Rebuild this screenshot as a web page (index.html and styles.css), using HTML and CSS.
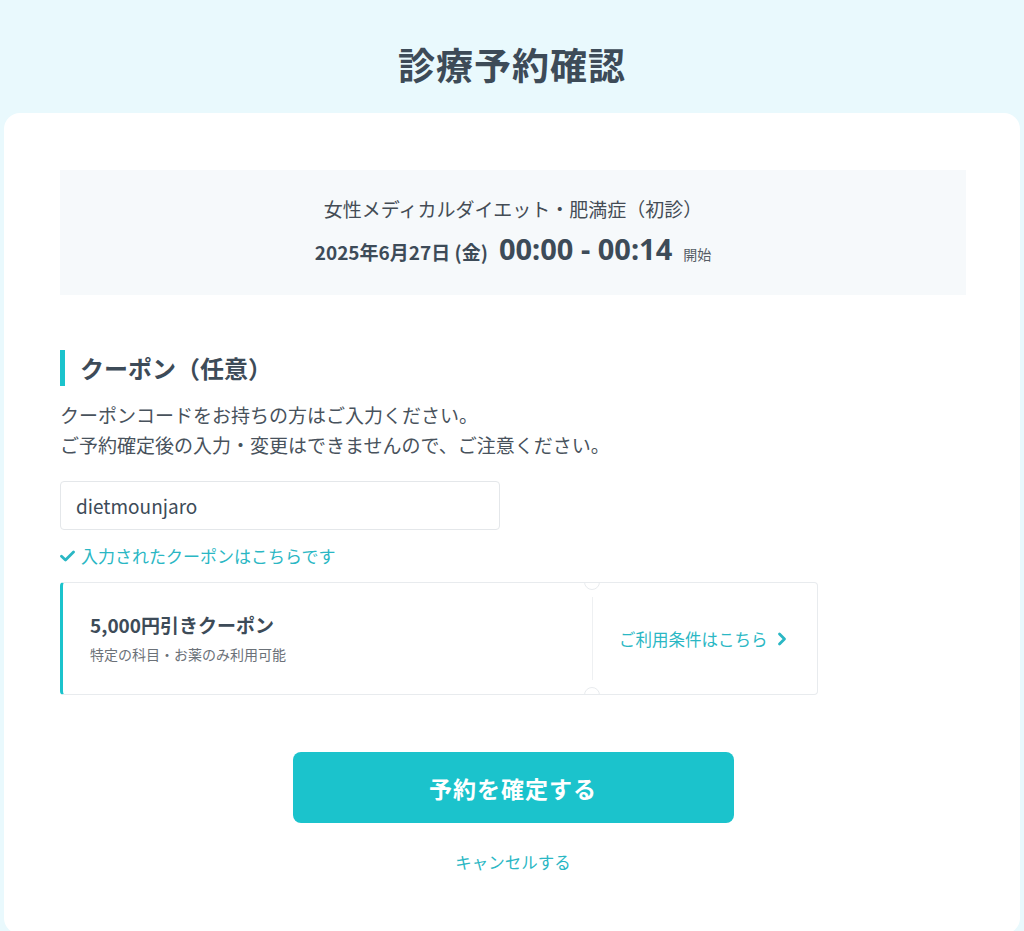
FILE: index.html
```html
<!DOCTYPE html>
<html lang="ja">
<head>
    <meta charset="UTF-8">
    <meta name="viewport" content="width=device-width, initial-scale=1.0">
    <title>診療予約確認</title>
    <link rel="stylesheet" href="styles.css">
</head>
<body>
    <h1 class="page-title">診療予約確認</h1>

    <div class="card">
        <div class="summary">
            <p class="summary-menu">女性メディカルダイエット・肥満症（初診）</p>
            <p class="summary-date">
                <span class="date">2025年6月27日 (金)</span>
                <span class="time">00:00 - 00:14</span>
                <span class="start">開始</span>
            </p>
        </div>

        <h2 class="section-title">クーポン（任意）</h2>
        <p class="section-note">クーポンコードをお持ちの方はご入力ください。<br>ご予約確定後の入力・変更はできませんので、ご注意ください。</p>

        <input class="coupon-input" type="text" value="dietmounjaro">

        <p class="coupon-ok">
            <svg width="15" height="12" viewBox="0 0 15 12"><path d="M1.5 6.2 L5.5 10 L13.5 2" fill="none" stroke="#2ab7c4" stroke-width="2.8" stroke-linecap="round" stroke-linejoin="round"/></svg>
            入力されたクーポンはこちらです
        </p>

        <div class="ticket">
            <div class="ticket-main">
                <div class="ticket-title">5,000円引きクーポン</div>
                <div class="ticket-sub">特定の科目・お薬のみ利用可能</div>
            </div>
            <div class="ticket-side">
                <a class="ticket-link" href="#">ご利用条件はこちら
                    <svg width="10" height="14" viewBox="0 0 10 14"><path d="M2.5 2 L7.5 7 L2.5 12" fill="none" stroke="#2ab7c4" stroke-width="2.8" stroke-linecap="round" stroke-linejoin="round"/></svg>
                </a>
            </div>
            <span class="notch notch-top"></span>
            <span class="notch notch-bottom"></span>
        </div>

        <div class="actions">
            <button class="confirm-btn">予約を確定する</button>
            <a class="cancel-link" href="#">キャンセルする</a>
        </div>
    </div>
</body>
</html>
```

FILE: styles.css
```css
body {
    margin: 0;
    padding-top: 37px;
    background-color: #e9f9fd;
    font-family: "Noto Sans CJK JP", "Noto Sans", sans-serif;
    color: #3d4b58;
}

p {
    margin: 0;
}

.page-title {
    margin: 0 0 22px;
    text-align: center;
    font-size: 37px;
    line-height: 54px;
    font-weight: 700;
    color: #3d4b58;
    letter-spacing: 1px;
}

.card {
    margin: 0 4px;
    padding: 57px 54px 60px 56px;
    background-color: #ffffff;
    border-radius: 16px;
    min-height: 700px;
}

.summary {
    background-color: #f6f9fb;
    padding: 25px 0 21px;
    text-align: center;
}

.summary-menu {
    font-size: 19px;
    line-height: 28px;
    color: #444c55;
}

.summary-date {
    margin-top: 6px;
    display: flex;
    justify-content: center;
    align-items: baseline;
    gap: 11px;
    line-height: 40px;
}

.summary-date .date {
    font-size: 19px;
    font-weight: 700;
}

.summary-date .time {
    font-size: 29px;
    font-weight: 700;
    font-family: "Noto Sans", sans-serif;
}

.summary-date .start {
    font-size: 14px;
    color: #555d66;
}

.section-title {
    margin: 55px 0 14px;
    padding-left: 15px;
    border-left: 5px solid #1bc3cc;
    font-size: 24px;
    line-height: 36px;
    font-weight: 700;
}

.section-note {
    font-size: 19px;
    line-height: 30px;
    color: #48525c;
}

.coupon-input {
    display: block;
    box-sizing: border-box;
    margin-top: 21px;
    width: 440px;
    height: 49px;
    padding: 0 15px;
    border: 1px solid #e4e7ea;
    border-radius: 4px;
    font-family: inherit;
    font-size: 19px;
    color: #3d4b58;
    outline: none;
}

.coupon-ok {
    margin-top: 13px;
    display: flex;
    align-items: center;
    gap: 6px;
    font-size: 17px;
    line-height: 26px;
    color: #2ab7c4;
}

.ticket {
    position: relative;
    margin-top: 13px;
    width: 758px;
    height: 113px;
    box-sizing: border-box;
    display: flex;
    border: 1px solid #e8ebee;
    border-left: 3px solid #1bc3cc;
    border-radius: 4px;
}

.ticket-main {
    width: 530px;
    box-sizing: border-box;
    border-right: 1px solid #eef0f2;
    margin: 14px 0;
    padding: 14px 0 0 27px;
}

.ticket-title {
    font-size: 19px;
    font-weight: 700;
    line-height: 28px;
}

.ticket-sub {
    margin-top: 5px;
    font-size: 14px;
    line-height: 20px;
    color: #6b7178;
}

.ticket-side {
    flex: 1;
    display: flex;
    align-items: center;
    padding-left: 26px;
}

.ticket-link {
    display: flex;
    align-items: center;
    gap: 9px;
    font-size: 16.5px;
    color: #2ab7c4;
    text-decoration: none;
}

.notch {
    position: absolute;
    left: 521px;
    width: 16px;
    height: 16px;
    box-sizing: border-box;
    border-radius: 50%;
    background-color: #ffffff;
    border: 1px solid #e8ebee;
}

.notch-top {
    top: -9px;
    clip-path: inset(9px 0 0 0);
}

.notch-bottom {
    bottom: -9px;
    clip-path: inset(0 0 9px 0);
}

.actions {
    margin-top: 57px;
    display: flex;
    flex-direction: column;
    align-items: center;
}

.confirm-btn {
    width: 441px;
    height: 71px;
    border: none;
    border-radius: 8px;
    background-color: #1bc3cc;
    color: #ffffff;
    font-family: inherit;
    font-size: 23px;
    font-weight: 700;
    letter-spacing: 1px;
    cursor: pointer;
}

.cancel-link {
    margin-top: 27px;
    font-size: 16.5px;
    color: #2ab7c4;
    text-decoration: none;
}
```
